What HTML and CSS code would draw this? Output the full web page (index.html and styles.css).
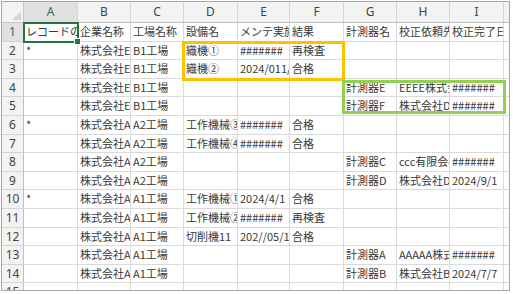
FILE: index.html
```html
<!DOCTYPE html>
<html lang="ja">
<head>
<meta charset="utf-8">
<link rel="stylesheet" href="styles.css">
</head>
<body>
<div class="frame">
  <div class="sheet">
    <div class="corner"></div><div class="ch sel">A</div><div class="ch">B</div><div class="ch">C</div><div class="ch">D</div><div class="ch">E</div><div class="ch">F</div><div class="ch">G</div><div class="ch">H</div><div class="ch">I</div><div class="ch">J</div>

    <div class="rh sel">1</div><div class="c">レコードの種類</div><div class="c">企業名称</div><div class="c">工場名称</div><div class="c">設備名</div><div class="c">メンテ実施日</div><div class="c">結果</div><div class="c">計測器名</div><div class="c">校正依頼先</div><div class="c">校正完了日</div><div class="c"></div>

    <div class="rh">2</div><div class="c">*</div><div class="c">株式会社EEEE</div><div class="c">B1工場</div><div class="c">織機①</div><div class="c">#######</div><div class="c">再検査</div><div class="c"></div><div class="c"></div><div class="c"></div><div class="c"></div>

    <div class="rh">3</div><div class="c"></div><div class="c">株式会社EEEE</div><div class="c">B1工場</div><div class="c">織機②</div><div class="c">2024/011/01</div><div class="c">合格</div><div class="c"></div><div class="c"></div><div class="c"></div><div class="c"></div>

    <div class="rh">4</div><div class="c"></div><div class="c">株式会社EEEE</div><div class="c">B1工場</div><div class="c"></div><div class="c"></div><div class="c"></div><div class="c">計測器E</div><div class="c">EEEE株式会社</div><div class="c">#######</div><div class="c"></div>

    <div class="rh">5</div><div class="c"></div><div class="c">株式会社EEEE</div><div class="c">B1工場</div><div class="c"></div><div class="c"></div><div class="c"></div><div class="c">計測器F</div><div class="c">株式会社D</div><div class="c">#######</div><div class="c"></div>

    <div class="rh">6</div><div class="c">*</div><div class="c">株式会社AAAA</div><div class="c">A2工場</div><div class="c">工作機械③</div><div class="c">#######</div><div class="c">合格</div><div class="c"></div><div class="c"></div><div class="c"></div><div class="c"></div>

    <div class="rh">7</div><div class="c"></div><div class="c">株式会社AAAA</div><div class="c">A2工場</div><div class="c">工作機械④</div><div class="c">#######</div><div class="c">合格</div><div class="c"></div><div class="c"></div><div class="c"></div><div class="c"></div>

    <div class="rh">8</div><div class="c"></div><div class="c">株式会社AAAA</div><div class="c">A2工場</div><div class="c"></div><div class="c"></div><div class="c"></div><div class="c">計測器C</div><div class="c">ccc有限会社</div><div class="c">#######</div><div class="c"></div>

    <div class="rh">9</div><div class="c"></div><div class="c">株式会社AAAA</div><div class="c">A2工場</div><div class="c"></div><div class="c"></div><div class="c"></div><div class="c">計測器D</div><div class="c">株式会社D</div><div class="c">2024/9/1</div><div class="c"></div>

    <div class="rh">10</div><div class="c">*</div><div class="c">株式会社AAAA</div><div class="c">A1工場</div><div class="c">工作機械①</div><div class="c">2024/4/1</div><div class="c">合格</div><div class="c"></div><div class="c"></div><div class="c"></div><div class="c"></div>

    <div class="rh">11</div><div class="c"></div><div class="c">株式会社AAAA</div><div class="c">A1工場</div><div class="c">工作機械②</div><div class="c">#######</div><div class="c">再検査</div><div class="c"></div><div class="c"></div><div class="c"></div><div class="c"></div>

    <div class="rh">12</div><div class="c"></div><div class="c">株式会社AAAA</div><div class="c">A1工場</div><div class="c">切削機11</div><div class="c">202//05/1</div><div class="c">合格</div><div class="c"></div><div class="c"></div><div class="c"></div><div class="c"></div>

    <div class="rh">13</div><div class="c"></div><div class="c">株式会社AAAA</div><div class="c">A1工場</div><div class="c"></div><div class="c"></div><div class="c"></div><div class="c">計測器A</div><div class="c">AAAAA株式会社</div><div class="c">#######</div><div class="c"></div>

    <div class="rh">14</div><div class="c"></div><div class="c">株式会社AAAA</div><div class="c">A1工場</div><div class="c"></div><div class="c"></div><div class="c"></div><div class="c">計測器B</div><div class="c">株式会社B</div><div class="c">2024/7/7</div><div class="c"></div>

    <div class="rh">15</div><div class="c"></div><div class="c"></div><div class="c"></div><div class="c"></div><div class="c"></div><div class="c"></div><div class="c"></div><div class="c"></div><div class="c"></div><div class="c"></div>
  </div>
  <div class="selection"><span class="handle"></span></div>
  <div class="mark mark-orange"></div>
  <div class="mark mark-green"></div>
</div>
</body>
</html>
```

FILE: styles.css
```css
html, body {
  margin: 0;
  padding: 0;
  background: #ffffff;
}

.frame {
  position: relative;
  box-sizing: border-box;
  margin: 1px 0 0 1px;
  width: 509px;
  height: 290px;
  border: 1px solid #a6a6a6;
  overflow: hidden;
  background: #ffffff;
}

.sheet {
  display: grid;
  grid-template-columns: 22px 54px 53px 53px 54px 52px 54px 53px 53px 54px 60px;
  grid-template-rows: 21px repeat(15, 18.6px);
  font-family: "Noto Sans CJK JP", "Noto Sans", sans-serif;
  font-size: 11px;
  color: #383838;
}

.c {
  box-sizing: border-box;
  border-right: 1px solid #dadada;
  border-bottom: 1px solid #dadada;
  padding-left: 2px;
  white-space: nowrap;
  overflow: hidden;
  line-height: 17px;
}

.corner {
  box-sizing: border-box;
  background: #f3f3f3 linear-gradient(to top left, #d6d6d6 0, #d6d6d6 50%, transparent 50%) no-repeat right 2px bottom 2px / 9px 9px;
  border-right: 1px solid #c8c8c8;
  border-bottom: 1px solid #c8c8c8;
}

.ch {
  box-sizing: border-box;
  background: #f3f3f3;
  border-right: 1px solid #d4d4d4;
  border-bottom: 1px solid #c0c0c0;
  text-align: center;
  font-family: "Noto Sans", sans-serif;
  font-size: 12px;
  line-height: 20px;
  color: #444444;
}

.rh {
  box-sizing: border-box;
  background: #f3f3f3;
  border-right: 1px solid #c0c0c0;
  border-bottom: 1px solid #d4d4d4;
  text-align: center;
  font-family: "Noto Sans", sans-serif;
  font-size: 12px;
  line-height: 18px;
  color: #444444;
  overflow: hidden;
}

.ch.sel,
.rh.sel {
  background: #e1e1e1;
  color: #217346;
}

.selection {
  position: absolute;
  left: 21px;
  top: 20px;
  width: 56px;
  height: 21px;
  box-sizing: border-box;
  border: 2px solid #217346;
}

.handle {
  position: absolute;
  right: -4px;
  bottom: -4px;
  width: 5px;
  height: 5px;
  background: #217346;
  border: 1px solid #ffffff;
}

.mark {
  position: absolute;
  box-sizing: border-box;
  border: 3px solid;
}

.mark-orange {
  left: 180px;
  top: 39px;
  width: 163px;
  height: 40px;
  border-color: #ffc000;
}

.mark-green {
  left: 340px;
  top: 78px;
  width: 164px;
  height: 34px;
  border-color: #92d050;
}
```
